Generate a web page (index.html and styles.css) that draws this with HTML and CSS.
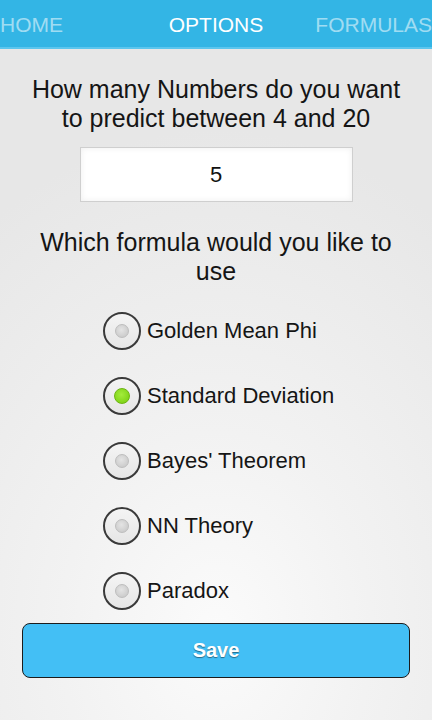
FILE: index.html
```html
<!DOCTYPE html>
<html lang="en">
<head>
    <meta charset="UTF-8">
    <meta name="viewport" content="width=device-width, initial-scale=1.0">
    <title>Options</title>
    <link rel="stylesheet" href="styles.css">
</head>
<body>
    <div id="nav">
        <span class="tab left">HOME</span>
        <span class="tab active">OPTIONS</span>
        <span class="tab right">FORMULAS</span>
    </div>
    <div id="page">
        <p class="question">How many Numbers do you want to predict between 4 and 20</p>
        <input type="text" id="count" value="5">
        <p class="question second">Which formula would you like to use</p>
        <div id="formulas">
            <label class="option"><span class="radio"></span>Golden Mean Phi</label>
            <label class="option"><span class="radio on"></span>Standard Deviation</label>
            <label class="option"><span class="radio"></span>Bayes' Theorem</label>
            <label class="option"><span class="radio"></span>NN Theory</label>
            <label class="option"><span class="radio"></span>Paradox</label>
        </div>
        <button id="save">Save</button>
    </div>
</body>
</html>
```

FILE: styles.css
```css
body{
    margin: 0;
    height: 720px;
    overflow: hidden;
    font-family: "Liberation Sans", Arial, sans-serif;
    color: #151515;
    background: radial-gradient(ellipse 90% 70% at 50% 88%, #fbfbfb 0%, #f2f2f2 40%, #e7e7e7 100%);
}
#nav{
    display: grid;
    grid-template-columns: 1fr auto 1fr;
    align-items: center;
    height: 47px;
    background: #33b5e5;
    border-bottom: 2px solid #5cc6ee;
}
.tab{
    font-size: 21px;
    color: rgba(255,255,255,0.55);
    padding-top: 3px;
}
.tab.left{
    justify-self: start;
}
.tab.right{
    justify-self: end;
}
.tab.active{
    color: #fff;
}
#page{
    display: flex;
    flex-direction: column;
    align-items: center;
}
.question{
    margin: 26px 0 0;
    padding: 0 20px;
    font-size: 25px;
    line-height: 29px;
    text-align: center;
}
#count{
    margin-top: 14px;
    width: 273px;
    height: 55px;
    box-sizing: border-box;
    border: 1px solid #cfcfcf;
    background: #fff;
    box-shadow: inset 0 0 6px rgba(0,0,0,0.07);
    text-align: center;
    font-family: "Liberation Sans", Arial, sans-serif;
    font-size: 22px;
    color: #111;
}
.second{
    margin-top: 26px;
}
#formulas{
    align-self: stretch;
    display: flex;
    flex-direction: column;
    gap: 27px;
    margin-top: 26px;
    padding-left: 103px;
}
.option{
    display: flex;
    align-items: center;
    height: 38px;
    font-size: 22px;
}
.radio{
    display: flex;
    align-items: center;
    justify-content: center;
    width: 38px;
    height: 38px;
    box-sizing: border-box;
    margin-right: 6px;
    border: 2px solid #3a3a3a;
    border-radius: 50%;
    background: linear-gradient(#f4f4f4, #e6e6e6);
}
.radio::after{
    content: "";
    width: 12px;
    height: 12px;
    border-radius: 50%;
    background: radial-gradient(circle at 45% 40%, #e4e4e4, #c4c4c4);
    border: 1px solid #bdbdbd;
}
.radio.on::after{
    width: 14px;
    height: 14px;
    background: radial-gradient(circle at 45% 40%, #a4ec3c, #74cc0c);
    border-color: #6cb512;
}
#save{
    margin-top: 13px;
    width: 388px;
    height: 55px;
    border: 1px solid #1c1c1c;
    border-radius: 8px;
    background: #43bff5;
    color: #fff;
    font-family: "Liberation Sans", Arial, sans-serif;
    font-size: 20px;
    font-weight: bold;
    text-shadow: 0 1px 1px rgba(0,0,0,0.45);
}
```
